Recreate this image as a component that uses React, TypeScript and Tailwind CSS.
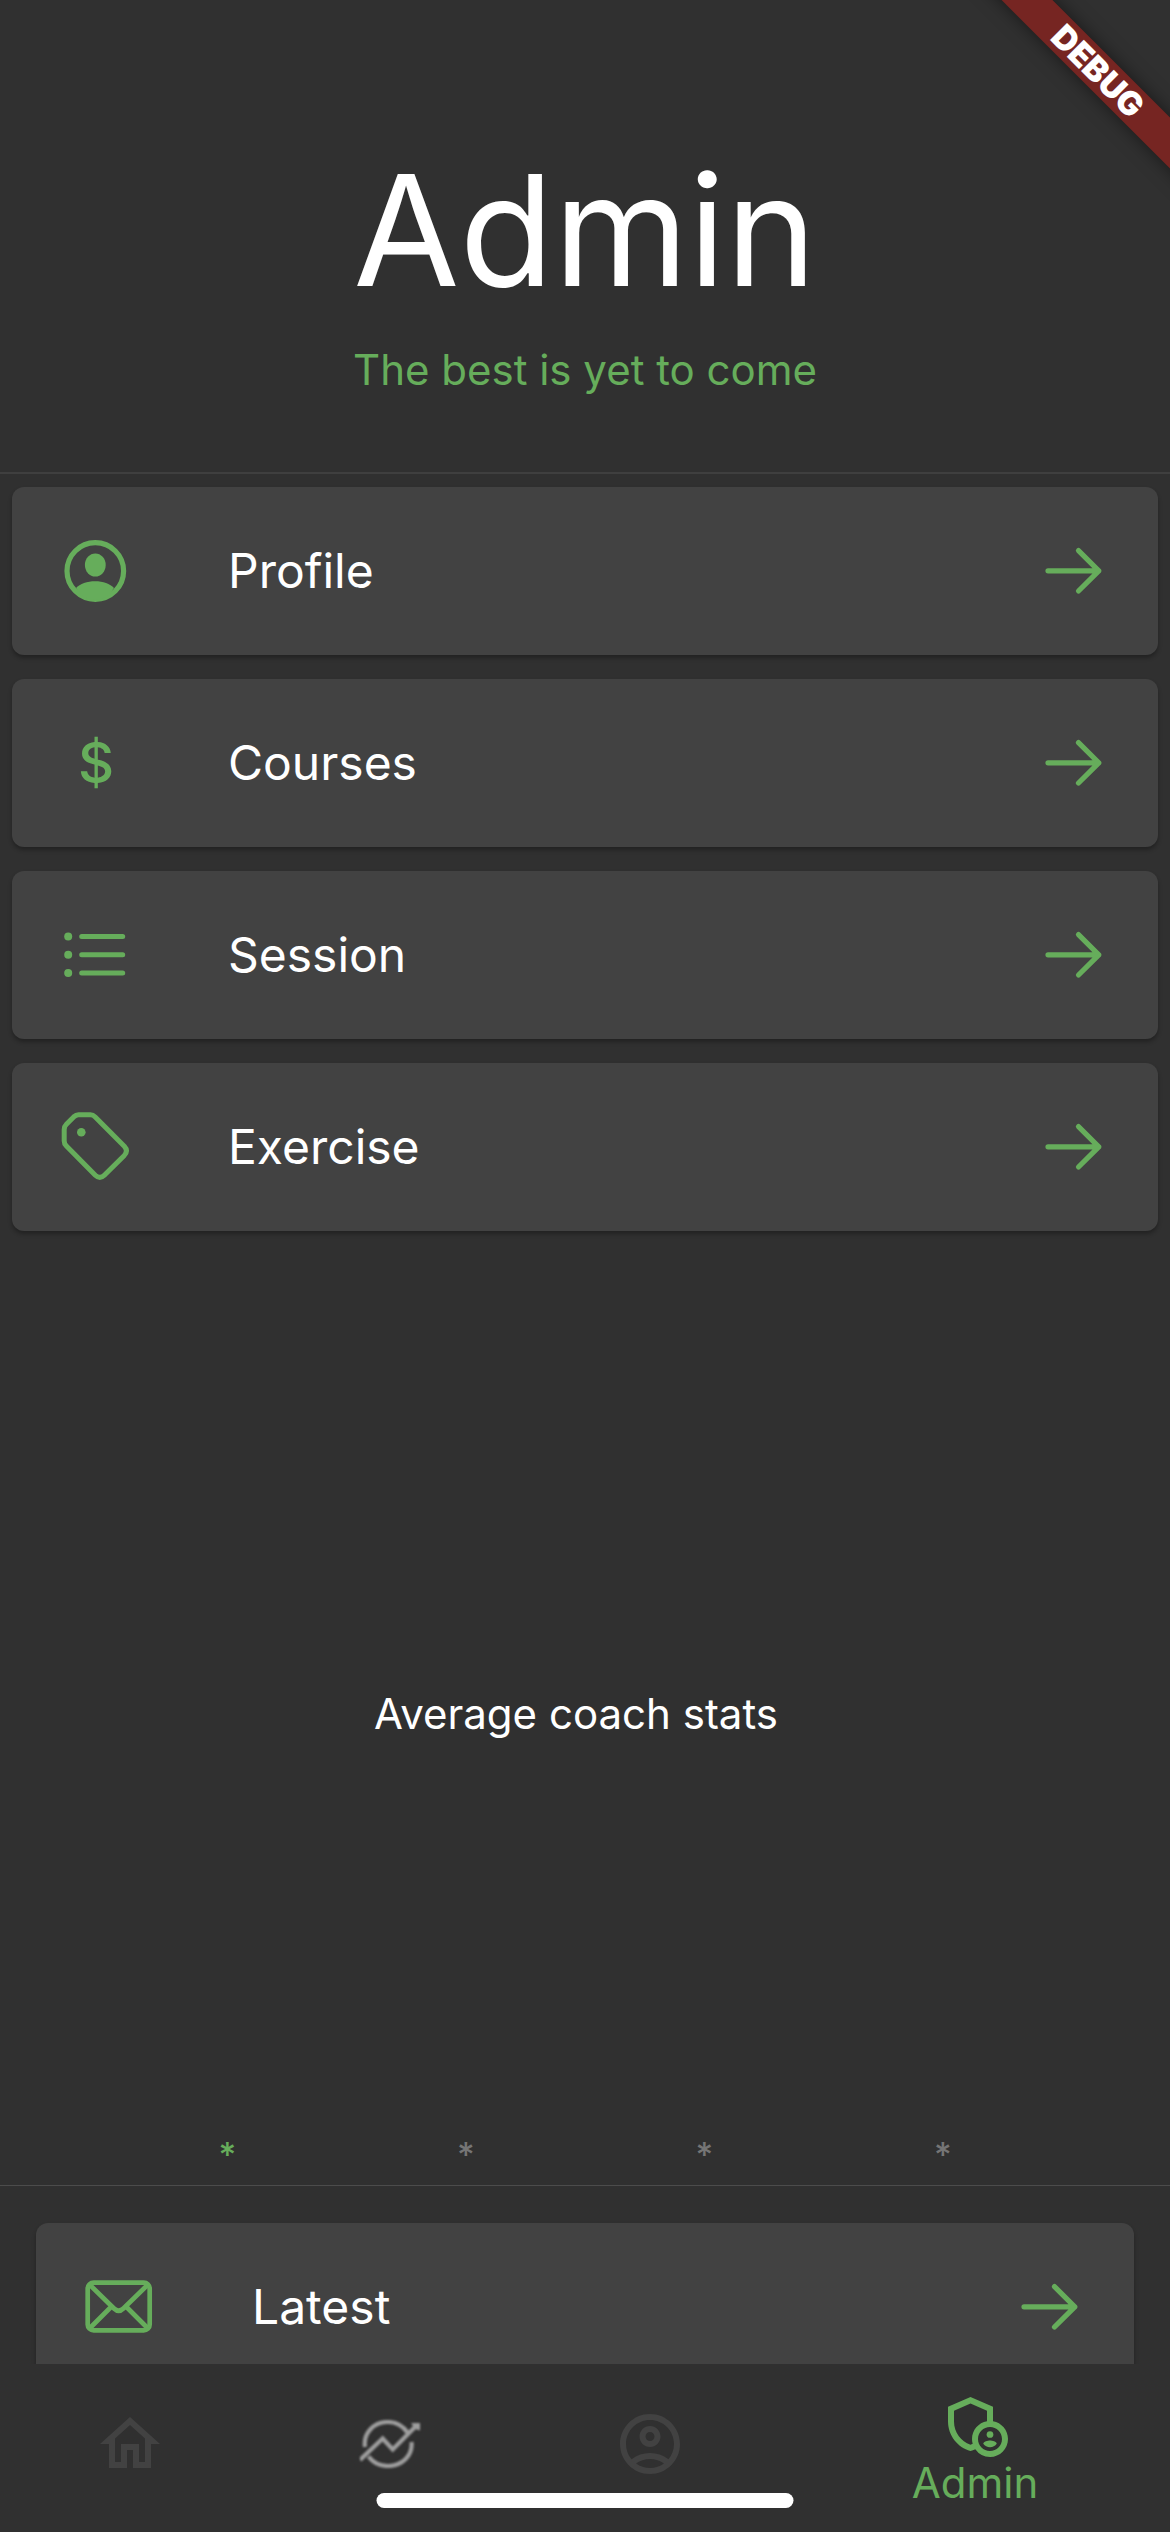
import type { ReactNode } from "react";
import { MdOutlineAccountCircle, MdOutlineAdminPanelSettings, MdOutlineHome } from "react-icons/md";

function ProfileIcon() {
  return (
    <svg viewBox="0 0 72 72" className="size-[72px]" fill="none" aria-hidden="true">
      <circle cx="35.3" cy="36" r="28.3" stroke="currentColor" strokeWidth="5.2" />
      <ellipse cx="35.3" cy="30" rx="10.4" ry="11.6" fill="currentColor" />
      <path d="M16 53 C20 49 27 46.3 35.3 46.3 C43 46.3 50 49 54 53 C49 61 43 65 35.3 65 C27 65 21 61 16 53Z" fill="currentColor" />
    </svg>
  );
}

function ListIcon() {
  return (
    <svg viewBox="0 0 72 72" className="size-[72px]" aria-hidden="true">
      <g stroke="currentColor" strokeWidth="5" strokeLinecap="round">
        <path d="M21.7 17.5H62.7M21.7 35.7H62.7M21.7 54H62.7" />
      </g>
      <g fill="currentColor">
        <circle cx="8.200" cy="17.5" r="4" />
        <circle cx="8.200" cy="35.7" r="4" />
        <circle cx="8.200" cy="54" r="4" />
      </g>
    </svg>
  );
}

function TagIcon() {
  return (
    <svg viewBox="0 0 72 72" className="size-[72px]" fill="none" aria-hidden="true">
      <path
        d="M18.500 3.700H30.500Q33 3.700 35.200 5.900L64.300 35.200Q68.600 39.800 64.300 44.400L44.300 64.300Q39.800 68.600 35.300 64.300L6.400 35.100Q4.200 32.900 4.200 29.900V18.500Q4.200 15.500 6.400 13.300L13.700 5.900Q16 3.700 18.500 3.700Z"
        stroke="currentColor"
        strokeWidth="5"
        strokeLinejoin="round"
      />
      <circle cx="21.300" cy="21.300" r="4.300" fill="currentColor" />
    </svg>
  );
}

function MailIcon() {
  return (
    <svg viewBox="0 0 72 72" className="size-[72px]" fill="none" stroke="currentColor" strokeWidth="4.700" aria-hidden="true">
      <rect x="3.700" y="11.700" width="62" height="47.700" rx="6" />
      <path d="M5.500 13.500L30 37.500Q34.700 42 39.400 37.500L64 13.500M5.500 57.500L27 36M64 57.500L42.500 36" />
    </svg>
  );
}

function ArrowIcon() {
  return (
    <svg
      viewBox="0 0 72 72"
      className="size-[72px]"
      fill="none"
      stroke="currentColor"
      strokeWidth="5.200"
      strokeLinecap="round"
      strokeLinejoin="round"
      aria-hidden="true"
    >
      <path d="M10 35.800H60.800M40.500 15.600L60.800 35.800L40.500 56" />
    </svg>
  );
}

function TrendIcon() {
  return (
    <svg viewBox="0 0 60 48" className="h-[48px] w-[60px] blur-[1px]" fill="none" stroke="#9e9e9e" strokeWidth="4.200" aria-hidden="true">
      <path d="M5 27C3 13 14 2 27.500 2C35.500 2 43 6 47.500 12.500M51.500 22C53 36 41.500 46 28 46C19.500 46 13 42.500 8.500 36.500" />
      <path d="M0 40L22.700 18.500L32.700 29.500L56 6" />
      <path d="M51 3H60V10.500L55 9Z" fill="#9e9e9e" stroke="none" />
    </svg>
  );
}

function MenuCard({ icon, label }: { icon: ReactNode; label: string }) {
  return (
    <button
      type="button"
      className="flex h-[168px] w-full shrink-0 items-center rounded-xl bg-[#424242] px-12 text-left text-5xl text-white shadow-[0_3px_4px_rgba(0,0,0,0.3)]"
    >
      <span className="flex w-[72px] justify-center text-[#66ad5b]">{icon}</span>
      <span className="ml-24 grow">{label}</span>
      <span className="text-[#66ad5b]">
        <ArrowIcon />
      </span>
    </button>
  );
}

const menu = [
  { label: "Profile", icon: <ProfileIcon /> },
  { label: "Courses", icon: <span className="text-[56px] leading-none font-medium">$</span> },
  { label: "Session", icon: <ListIcon /> },
  { label: "Exercise", icon: <TagIcon /> },
];

export default function App() {
  return (
    <div className="relative flex h-screen flex-col overflow-hidden bg-[#303030] font-['Inter',sans-serif] text-white">
      <header className="flex shrink-0 flex-col items-center border-b-2 border-[#3f3f3f] pt-[134px] pb-[72px] text-center">
        <h1 className="text-[154px] leading-[192px]">Admin</h1>
        <p className="mt-[14px] text-[42px] leading-[60px] text-[#66ad5b]">The best is yet to come</p>
      </header>

      <main className="flex min-h-0 grow flex-col overflow-hidden">
        <nav aria-label="Admin sections" className="flex flex-col gap-6 px-3 pt-[13px]">
          {menu.map((item) => (
            <MenuCard key={item.label} icon={item.icon} label={item.label} />
          ))}
        </nav>

        <section className="flex grow flex-col">
          <div className="flex grow items-center justify-center pt-[72px] pr-[18px]">
            <h2 className="text-[42px] leading-[60px]">Average coach stats</h2>
          </div>
          <div className="grid grid-cols-4 px-[108px] text-center text-[34px] leading-[60px] font-medium text-[#757575]">
            <span className="text-[#66ad5b]">*</span>
            <span>*</span>
            <span>*</span>
            <span>*</span>
          </div>
        </section>

        <section className="h-[179px] shrink-0 border-t border-[#4c4c4c] px-9 pt-[37px]">
          <MenuCard icon={<MailIcon />} label="Latest" />
        </section>
      </main>

      <nav aria-label="Main" className="relative z-10 flex h-[168px] shrink-0 bg-[#303030] text-[#424242]">
        <button type="button" aria-label="Home" className="flex flex-[2] items-center justify-center pb-2">
          <MdOutlineHome className="size-[72px]" />
        </button>
        <button type="button" aria-label="Trends" className="flex flex-[2] items-center justify-center pb-2">
          <TrendIcon />
        </button>
        <button type="button" aria-label="Account" className="flex flex-[2] items-center justify-center pb-2">
          <MdOutlineAccountCircle className="size-[72px]" />
        </button>
        <button type="button" className="flex flex-[3] flex-col items-center pt-6 text-[42px] leading-[46px] text-[#66ad5b]">
          <MdOutlineAdminPanelSettings className="size-[72px]" />
          Admin
        </button>
        <div className="absolute bottom-6 left-1/2 h-[15px] w-[417px] -translate-x-1/2 rounded-full bg-white" />
      </nav>

      <div className="absolute top-[53px] right-[-78px] flex h-9 w-[300px] rotate-45 items-center justify-center bg-[#762522] text-[33px] leading-none font-black shadow-[0_0_18px_rgba(0,0,0,0.5)]">
        DEBUG
      </div>
    </div>
  );
}
